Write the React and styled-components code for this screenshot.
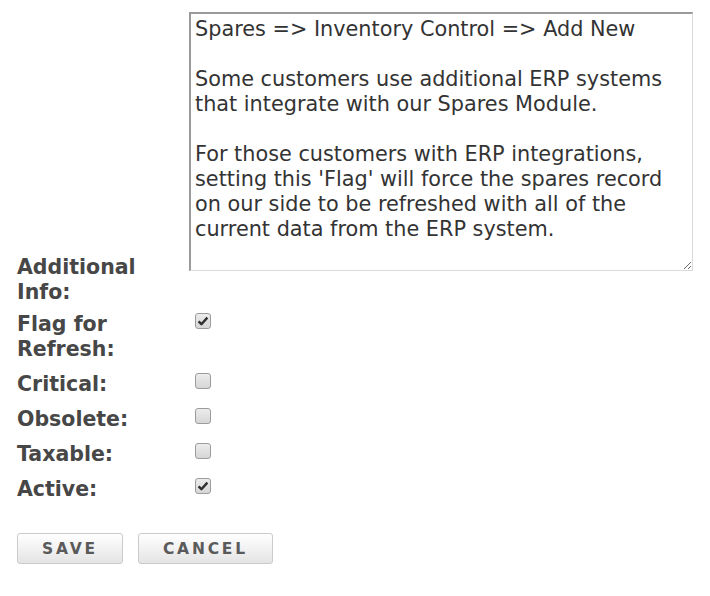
import styled, { createGlobalStyle } from "styled-components"

const GlobalStyle = createGlobalStyle`
    html, body {
        margin: 0;
        background: #ffffff;
    }
    body {
        font-family: "DejaVu Sans", Verdana, sans-serif;
    }
`

const notes = `Spares => Inventory Control => Add New

Some customers use additional ERP systems that integrate with our Spares Module.

For those customers with ERP integrations, setting this 'Flag' will force the spares record on our side to be refreshed with all of the current data from the ERP system.`

const flags = [
    { label: ["Flag for", "Refresh:"], checked: true },
    { label: ["Critical:"], checked: false },
    { label: ["Obsolete:"], checked: false },
    { label: ["Taxable:"], checked: false },
    { label: ["Active:"], checked: true },
]

function Check({ checked }) {
    return (
        <Box>
            {checked && (
                <svg width="12" height="12" viewBox="0 0 12 12">
                    <path d="M1.6 6.4 L4.4 9.2 L10.4 2.6" fill="none" stroke="#2f2f2f" strokeWidth="2.4" strokeLinejoin="round" />
                </svg>
            )}
        </Box>
    )
}

export default function App() {
    return (
        <Page>
            <GlobalStyle />
            <Form>
                <NotesRow>
                    <Label $offset={243}>Additional<br />Info:</Label>
                    <Notes defaultValue={notes} />
                </NotesRow>
                {flags.map((f) => (
                    <Row key={f.label.join(" ")}>
                        <Label>
                            {f.label.map((l, i) => <span key={i}>{l}{i < f.label.length - 1 && <br />}</span>)}
                        </Label>
                        <Field>
                            <Check checked={f.checked} />
                        </Field>
                    </Row>
                ))}
            </Form>
            <Buttons>
                <Button>SAVE</Button>
                <Button>CANCEL</Button>
            </Buttons>
        </Page>
    )
}

const Page = styled.div`
    padding: 12px 0 0 17px;
    width: 693px;
    height: 584px;
    box-sizing: border-box;
`
const Form = styled.div`
    display: flex;
    flex-direction: column;
    gap: 10px;
`
const NotesRow = styled.div`
    display: flex;
    align-items: flex-start;
    margin-bottom: -3px;
`
const Row = styled.div`
    display: flex;
    align-items: flex-start;
`
const Label = styled.div`
    width: 172px;
    flex-shrink: 0;
    margin-top: ${props => props.$offset || 0}px;
    font-family: "DejaVu Sans", Verdana, sans-serif;
    font-weight: 700;
    font-size: 20.5px;
    line-height: 25px;
    color: #474747;
`
const Field = styled.div`
    padding-left: 6px;
`
const Notes = styled.textarea`
    width: 506px;
    height: 259px;
    box-sizing: border-box;
    margin: 0;
    padding: 3px 4px;
    border: 1px solid;
    border-width: 2px 1px 1px 2px;
    border-color: #9a9a9a #dadada #dadada #9a9a9a;
    font-family: "DejaVu Sans", Verdana, sans-serif;
    font-size: 20.8px;
    line-height: 25px;
    color: #333333;
    background: #ffffff;
    resize: both;
    outline: none;
`
const Box = styled.span`
    display: flex;
    align-items: center;
    justify-content: center;
    width: 16px;
    height: 16px;
    box-sizing: border-box;
    border: 1px solid #9c9c9c;
    border-radius: 3px;
    background: linear-gradient(#ececec, #d6d6d6);
    margin-top: 1px;
`
const Buttons = styled.div`
    display: flex;
    gap: 15px;
    margin-top: 31px;
`
const Button = styled.button`
    height: 31px;
    padding: 0 24px;
    border: 1px solid #cacaca;
    border-radius: 3px;
    background: linear-gradient(#ffffff, #e4e4e4);
    font-family: "DejaVu Sans", Verdana, sans-serif;
    font-weight: 700;
    font-size: 15.5px;
    letter-spacing: 2.8px;
    color: #5a5a5a;
    cursor: pointer;
`
